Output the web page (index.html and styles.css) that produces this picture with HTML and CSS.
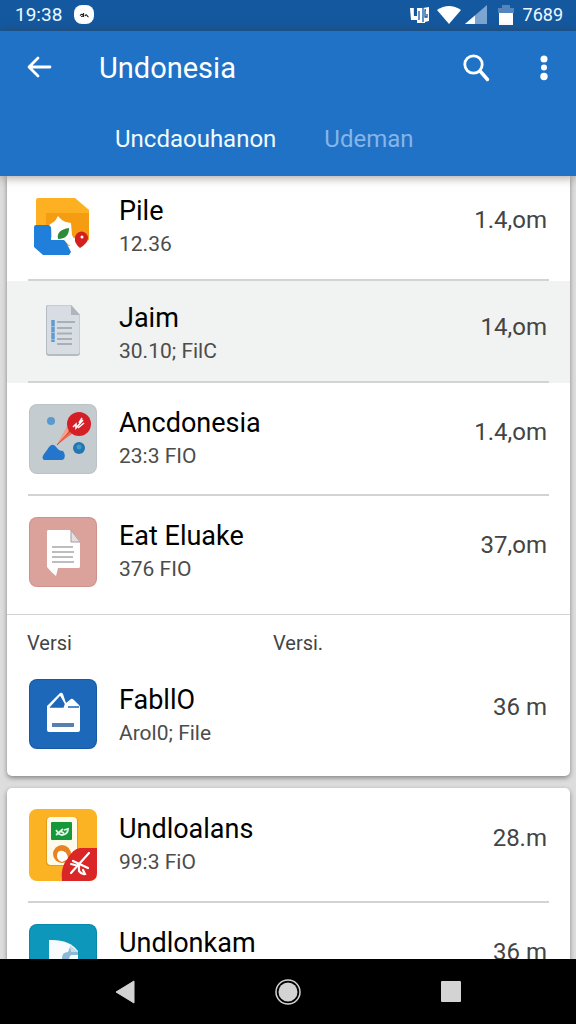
FILE: index.html
```html
<!DOCTYPE html>
<html lang="id">
<head>
<meta charset="utf-8">
<meta name="viewport" content="width=device-width, initial-scale=1">
<title>Undonesia</title>
<link rel="stylesheet" href="styles.css">
</head>
<body>
<div class="status">
  <span class="clock">19:38</span>
  <svg width="20" height="20" viewBox="0 0 20 20" aria-hidden="true"><rect x="0" y="0" width="20" height="19" rx="8" fill="#fff"/><path d="M6 10.500q2-2 3-.5t-2 1.500M9.500 8v4M11 11q1-2 2-.5t1.500 1" fill="none" stroke="#222" stroke-width="1.200"/></svg>
  <div class="status-icons">
    <svg class="i-net" width="19" height="18" viewBox="0 0 19 18" aria-hidden="true"><path d="M0 2h4v8h3V2h6v0l6-1v14l-4 1v1H7v-3H1z" fill="#fff"/><path d="M4.500 2v7M9 5v9M13 2v14M16 4h-1v7h2V8" fill="none" stroke="#1558a0" stroke-width="1.300"/></svg>
    <svg class="i-wifi" width="24" height="18" viewBox="0 0 24 18" aria-hidden="true"><path d="M0 4Q12-4 24 4L12 18z" fill="#fff"/></svg>
    <svg class="i-signal" width="22" height="19" viewBox="0 0 22 19" aria-hidden="true"><path d="M22 0v19H0z" fill="#7da5d1"/><path d="M10 10.400V19H0z" fill="#fff"/></svg>
    <svg class="i-battery" width="16" height="20" viewBox="0 0 16 20" aria-hidden="true"><path d="M0 3h4V0h8v3h4v5H0z" fill="#5486bd"/><path d="M1 8h14v12H1z" fill="#fff"/></svg>
    <span class="count">7689</span>
  </div>
</div>

<header class="appbar">
  <div class="toolbar">
    <button class="icon-btn" aria-label="Back"><svg width="26" height="24" viewBox="0 0 26 24"><path d="M23 11H3M11 2L2 11l9 9" fill="none" stroke="#fff" stroke-width="2.800" stroke-linecap="round" stroke-linejoin="round"/></svg></button>
    <h1 class="heading">Undonesia</h1>
    <button class="icon-btn" aria-label="Search"><svg width="27" height="28" viewBox="0 0 27 28"><circle cx="10.500" cy="10.500" r="8.700" fill="none" stroke="#fff" stroke-width="2.800"/><path d="M17 17l7.500 8.500" stroke="#fff" stroke-width="3.500" stroke-linecap="round"/></svg></button>
    <button class="icon-btn more" aria-label="More options"><svg width="8" height="26" viewBox="0 0 8 26"><g fill="#fff"><circle cx="4" cy="4" r="3.500"/><circle cx="4" cy="12.500" r="3"/><circle cx="4" cy="21.500" r="3.700"/></g></svg></button>
  </div>
  <nav class="tabs">
    <a class="tab active" href="#a" aria-current="page">Uncdaouhanon</a>
    <a class="tab" href="#b">Udeman</a>
  </nav>
</header>

<main class="content">
  <section class="card first">
    <ul class="list">
      <li class="row compact"><div class="inner">
        <svg class="tile" viewBox="0 0 68 70" aria-hidden="true"><path d="M9 6h37l14 12v30L40 54 7 38V8q0-2 2-2z" fill="#fdb022"/><path d="M17 21h43v26L45 50 17 40z" fill="#f59c10"/><path d="M7 33h12q3 0 3 3v12h14l6 12-2 3H14l-9-8V35q0-2 2-2z" fill="#1f7fda"/><path d="M29 24q4 5 8 6l5 1 1 12 4 8-7 2-5-5H23l-1-13-2-2 6-4z" fill="#fff"/><path d="M29 47q-2-9 11-11 0 11-11 11z" fill="#2f8b3c"/><path d="M37 47l10-1 7 9-7 7z" fill="#fff"/><path d="M51 56q-6-5-5-10a6.500 6.500 0 0 1 13 0q0 5-8 10z" fill="#d3201f"/><circle cx="53" cy="45" r="1.500" fill="#fff"/></svg>
        <div class="text"><h2 class="title">Pile</h2><p class="sub">12.36</p></div>
        <span class="value">1.4,om</span>
      </div></li>
      <li class="row compact selected"><div class="inner">
        <svg class="tile" viewBox="0 0 68 70" aria-hidden="true"><path d="M19 9h23l9 10v38q0 3-3 3H20q-3 0-3-3V11q0-2 2-2z" fill="#b4bbc2"/><path d="M20 9.500h22l8.500 10V56q0 2-2 2H20q-2 0-2-2V11.500q0-2 2-2z" fill="#d7dde2"/><path d="M42 9v10h9z" fill="#aeb5bc"/><path d="M24 24v22" stroke="#5d9bd2" stroke-width="3.500" stroke-dasharray="6 .5"/><path d="M28 26h18M28 32h15M28 37.500h15M28 43h15M28 48h15" stroke="#a7afb7" stroke-width="2"/></svg>
        <div class="text"><h2 class="title">Jaim</h2><p class="sub">30.10; FilC</p></div>
        <span class="value">14,om</span>
      </div></li>
      <li class="row"><div class="inner">
        <svg class="tile" viewBox="0 0 68 70" aria-hidden="true"><rect width="68" height="70" rx="8" fill="#bbc3c7"/><rect x="1" y="1" width="66" height="68" rx="7" fill="#c5cccf"/><path d="M38 23L28 41l16-12z" fill="#f16b50"/><path d="M38 23L28 41l9-9 3-7z" fill="#f7a08c"/><path d="M28 41l13-14" stroke="#c94432" stroke-width="1"/><circle cx="50" cy="20" r="12" fill="#d51f26"/><path d="M44 23l3-3v4l7-8M50 19l3-5M49 24l6-5" fill="none" stroke="#fff" stroke-width="1.500"/><circle cx="22" cy="17" r="4" fill="#5899cf"/><circle cx="50" cy="44" r="6" fill="#2574b5"/><circle cx="50" cy="43" r="2.500" fill="#3f9eba"/><path d="M15 50l3-4 2-3q4-5 8 1 2 3 6 3 3 4 1 8-1 1-3 1H15q-3-2 0-6z" fill="#2376cc"/></svg>
        <div class="text"><h2 class="title">Ancdonesia</h2><p class="sub">23:3 FIO</p></div>
        <span class="value">1.4,om</span>
      </div></li>
      <li class="row last"><div class="inner">
        <svg class="tile" viewBox="0 0 68 70" aria-hidden="true"><rect width="68" height="70" rx="8" fill="#cf918b"/><rect x="1" y="1" width="66" height="68" rx="7" fill="#dba19b"/><path d="M19 13h23l9 11v26q0 1-2 1H29l-2 8q-5-4-9-9V15q0-2 1-2z" fill="#fff"/><path d="M42 13v12h9z" fill="#e2e0e1" stroke="#a99a9b" stroke-width="1"/><path d="M23 30h21M23 35h22M23 40h21M23 45h22" stroke="#aaa6aa" stroke-width="1.600"/></svg>
        <div class="text"><h2 class="title">Eat Eluake</h2><p class="sub">376 FIO</p></div>
        <span class="value">37,om</span>
      </div></li>
    </ul>
    <div class="versions"><span>Versi</span><span>Versi.</span></div>
    <ul class="list">
      <li class="row tight"><div class="inner">
        <svg class="tile" viewBox="0 0 68 70" aria-hidden="true"><rect width="68" height="70" rx="8" fill="#1559a4"/><rect x="1" y="1" width="66" height="68" rx="7" fill="#1d68b8"/><path d="M18 27l13-13q2-1 3 1l3 9 5-4q1-1 3 1l5 5q1 1 1 3v22q0 2-2 2H20q-2 0-2-2z" fill="#fff"/><path d="M22 28l9-10 4 7-1 3zM39 28h11" fill="#1d68b8" stroke="#1d68b8" stroke-width="1.500"/><path d="M23 46h22" stroke="#587fb1" stroke-width="4"/></svg>
        <div class="text"><h2 class="title">FabllO</h2><p class="sub">Arol0; File</p></div>
        <span class="value">36 m</span>
      </div></li>
    </ul>
  </section>
  <section class="card">
    <ul class="list">
      <li class="row"><div class="inner">
        <svg class="tile tall" viewBox="0 0 68 72" aria-hidden="true"><rect width="68" height="72" rx="8" fill="#fbb324"/><rect x="17" y="8" width="32" height="49" rx="4" fill="#e79a18"/><rect x="18" y="8" width="30" height="48" rx="4" fill="#fffbea"/><rect x="22" y="13" width="21" height="18" rx="1" fill="#14983a"/><path d="M27 26l7-6M27 21l3 4 3 1q6-1 6-6l-4 1M31 22l4 2" fill="none" stroke="#e1f7e5" stroke-width="1.800"/><circle cx="33" cy="45" r="9" fill="#e98221"/><path d="M28 47q0-6 6-5 5 2 5 8l-6 3q-5-2-5-6z" fill="#fff"/><path d="M51 39h17v25q0 8-8 8H33q-2-14 6-23 5-9 12-10z" fill="#da2626"/><path d="M42 64l18-20M44 52l15 7M42 55l8 2v5q3 4 6 3l-2-4" fill="none" stroke="#fff" stroke-width="2.200" stroke-linecap="round"/></svg>
        <div class="text"><h2 class="title">Undloalans</h2><p class="sub">99:3 FiO</p></div>
        <span class="value">28.m</span>
      </div></li>
      <li class="row"><div class="inner">
        <svg class="tile" viewBox="0 0 68 70" aria-hidden="true"><rect width="68" height="70" rx="8" fill="#0787a9"/><rect x="1" y="1" width="66" height="68" rx="7" fill="#0d98bb"/><path d="M20 16q20-1 29 11v27H20z" fill="#f8fbfd"/><path d="M33 34q0-6 6-6l2-5 8 5v3h-6q-3 0-3 6h-7z" fill="#8db9d7"/><path d="M41 21l8 7h-7z" fill="#c5dcea"/></svg>
        <div class="text"><h2 class="title">Undlonkam</h2></div>
        <span class="value">36 m</span>
      </div></li>
    </ul>
  </section>
</main>

<nav class="navbar" aria-label="System">
  <button class="icon-btn" aria-label="Back"><svg width="20" height="24" viewBox="0 0 20 24"><path d="M19 1v22L1 12z" fill="#d3d3d3" stroke="#d3d3d3" stroke-linejoin="round"/></svg></button>
  <button class="icon-btn" aria-label="Home"><svg width="26" height="26" viewBox="0 0 26 26"><circle cx="13" cy="13" r="12" fill="none" stroke="#d3d3d3" stroke-width="1.500"/><circle cx="13" cy="13" r="9.500" fill="#d3d3d3"/></svg></button>
  <button class="icon-btn" aria-label="Recents"><svg width="20" height="22" viewBox="0 0 20 22"><rect width="20" height="21" rx="1" fill="#d3d3d3"/></svg></button>
</nav>
</body>
</html>
```
FILE: styles.css
```css
* {
  box-sizing: border-box;
}

body {
  margin: 0;
  height: 100vh;
  display: flex;
  flex-direction: column;
  overflow: hidden;
  background: #dcdddc;
  color: #000;
  font-family: Roboto, "Noto Sans", sans-serif;
}

h1, h2, p, ul {
  margin: 0;
  padding: 0;
  font-weight: 400;
}

svg {
  display: block;
  flex: none;
}

.status {
  flex: none;
  display: flex;
  align-items: center;
  gap: 12px;
  padding: 0 13px 2px 15px;
  height: 31px;
  background: #1459a0;
  color: #eef9ff;
  font-size: 19px;
}

.status-icons {
  display: flex;
  align-items: center;
  margin-left: auto;
}

.i-wifi {
  margin-left: 8px;
}

.i-signal {
  margin-left: 4px;
}

.i-battery {
  margin: 0 9px 0 11px;
}

.count {
  font-size: 18px;
}

.appbar {
  flex: none;
  position: relative;
  z-index: 1;
  background: #1f72c6;
  box-shadow: 0 1px 10px rgba(60, 45, 35, 0.5);
}

.toolbar {
  display: flex;
  align-items: center;
  height: 73px;
  padding: 0 28px 0 27px;
}

.icon-btn {
  padding: 0;
  border: 0;
  background: none;
  cursor: pointer;
}

.heading {
  flex: 1;
  margin-left: 46px;
  color: #fff;
  font-size: 29px;
  line-height: 36px;
}

.more {
  margin-left: 50px;
}

.tabs {
  display: flex;
  gap: 48px;
  height: 72px;
  padding: 17px 0 0 115px;
}

.tab {
  color: #86b5e6;
  font-size: 24px;
  line-height: 36px;
  text-decoration: none;
}

.tab.active {
  color: #f0fbff;
}

.content {
  flex: 1;
  min-height: 0;
  overflow: hidden;
  padding: 0 6px 0 7px;
}

.card {
  margin-bottom: 12px;
  border-radius: 5px;
  background: #fff;
  box-shadow: 0 2px 5px rgba(0, 0, 0, 0.4);
  overflow: hidden;
}

.card.first {
  border-top-left-radius: 0;
  border-top-right-radius: 0;
}

.list {
  list-style: none;
}

.inner {
  display: flex;
  align-items: center;
  margin: 0 21px;
  padding: 21px 2px 20px 1px;
  border-bottom: 2px solid #d2d3d3;
}

.compact .inner {
  padding-top: 16px;
  padding-bottom: 17px;
}

.selected {
  background: #f1f2f2;
}

.selected .inner {
  padding-top: 14px;
  padding-bottom: 14px;
}

.selected .text,
.selected .value {
  padding-top: 6px;
}

.last {
  border-bottom: 1px solid #d2d3d3;
}

.last .inner {
  padding-bottom: 27px;
  border-bottom: 0;
}

.tight .inner {
  padding-top: 8px;
  padding-bottom: 27px;
  border-bottom: 0;
}

.tight .text {
  padding-top: 4px;
}

.tile {
  width: 68px;
  height: 70px;
}

.tile.tall {
  height: 72px;
}

.text {
  flex: 1;
  min-height: 66px;
  margin-left: 22px;
}

.title {
  font-size: 27px;
  line-height: 34px;
}

.sub {
  color: #4c4c4c;
  font-size: 21px;
  line-height: 32px;
}

.value {
  padding-bottom: 14px;
  color: #444;
  font-size: 24px;
  line-height: 32px;
}

.versions {
  display: grid;
  grid-template-columns: 246px 1fr;
  padding: 12px 20px;
  color: #444;
  font-size: 20px;
  line-height: 32px;
}

.navbar {
  flex: none;
  position: relative;
  z-index: 1;
  display: flex;
  align-items: center;
  justify-content: center;
  gap: 140px;
  height: 65px;
  background: #000;
}
```
